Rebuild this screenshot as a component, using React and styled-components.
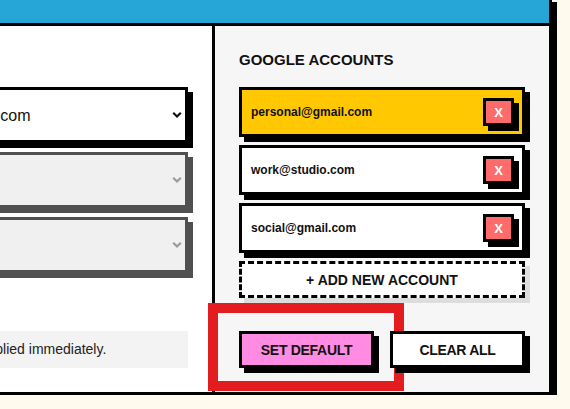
import React from 'react';
import styled, { createGlobalStyle } from 'styled-components';

/* ───────── global ───────── */

const GlobalStyle = createGlobalStyle`
  html, body {
    margin: 0;
    padding: 0;
  }

  body {
    background: #fffaee;
    font-family: "Liberation Sans", Arial, sans-serif;
    color: #111111;
    overflow: hidden;
  }

  * {
    box-sizing: border-box;
  }
`;

/* ───────── card shell ───────── */

const Card = styled.section`
  width: 716px;
  margin: -3px 0 0 -164px;
  border: 3px solid #000000;
  box-shadow: 5px 5px 0 #000000;
  background: #ffffff;
`;

const Header = styled.header`
  height: 26px;
  background: #25a6d6;
  border-bottom: 3px solid #000000;
`;

const Body = styled.div`
  display: grid;
  grid-template-columns: 1fr 337px;
`;

const Panel = styled.div`
  display: flex;
  flex-direction: column;
  padding: 24px;
  background: ${(p) => (p.$side ? '#f6f6f6' : '#ffffff')};
  border-left: ${(p) => (p.$side ? '3px solid #000000' : 'none')};
`;

const SectionTitle = styled.h2`
  margin: 0 0 17px 0;
  font-size: 15px;
  line-height: 20px;
  font-weight: 700;
  text-transform: uppercase;
  color: #111111;
`;

/* ───────── routing selects ───────── */

const SelectStack = styled.div`
  display: flex;
  flex-direction: column;
  gap: 9px;
  margin-top: 37px;
`;

const SelectWrap = styled.div`
  position: relative;
  box-shadow: 5px 5px 0 ${(p) => (p.disabled ? '#505050' : '#000000')};
  color: ${(p) => (p.disabled ? '#9a9a9a' : '#111111')};
`;

const Select = styled.select`
  display: block;
  width: 100%;
  height: 56px;
  appearance: none;
  margin: 0;
  padding: 0 34px 0 14px;
  border: 3px solid #000000;
  border-radius: 0;
  background: #ffffff;
  font-family: inherit;
  font-size: 16px;
  color: #111111;
  outline: none;
  opacity: 1;

  &:disabled {
    opacity: 1;
    border-color: #505050;
    background: #f0f0f0;
    color: #f0f0f0;
  }
`;

const Chevron = styled.svg`
  position: absolute;
  right: 6px;
  top: 50%;
  width: 10px;
  height: 7px;
  transform: translateY(-50%);
  pointer-events: none;
`;

const Note = styled.p`
  margin: auto 0 0 0;
  padding: 10px 14px;
  background: #f3f3f3;
  font-size: 14px;
  line-height: 17px;
  color: #222222;
`;

/* ───────── accounts ───────── */

const AccountList = styled.div`
  display: flex;
  flex-direction: column;
  gap: 8px;
`;

const AccountRow = styled.div`
  display: flex;
  align-items: center;
  justify-content: space-between;
  height: 50px;
  padding: 0 8px 0 9px;
  border: 3px solid #000000;
  background: ${(p) => (p.$active ? '#ffc800' : '#ffffff')};
  box-shadow: 5px 5px 0 #000000;
  font-size: 12px;
  font-weight: 700;
`;

const RemoveButton = styled.button`
  width: 31px;
  height: 28px;
  padding: 0;
  border: 3px solid #000000;
  background: #ff6b6b;
  box-shadow: 5px 5px 0 #000000;
  color: #ffffff;
  font-family: inherit;
  font-size: 13px;
  font-weight: 700;
  cursor: pointer;
`;

const AddButton = styled.button`
  height: 37px;
  padding: 0;
  border: 3px dashed #000000;
  background: #ffffff;
  box-shadow: 5px 5px 0 #dddddd;
  color: #111111;
  font-family: inherit;
  font-size: 14px;
  font-weight: 700;
  cursor: pointer;
`;

const Actions = styled.div`
  display: grid;
  grid-template-columns: 1fr 1fr;
  gap: 16px;
  margin-top: 33px;
`;

const ActionSlot = styled.div`
  position: relative;
`;

const ActionButton = styled.button`
  width: 100%;
  height: 37px;
  padding: 0;
  border: 3px solid #000000;
  background: ${(p) => p.$bg || '#ffffff'};
  box-shadow: 5px 5px 0 #000000;
  color: #111111;
  font-family: inherit;
  font-size: 14px;
  font-weight: 700;
  letter-spacing: -0.3px;
  cursor: pointer;
`;

/* red callout ring drawn over the focused action */
const Callout = styled.span`
  position: absolute;
  top: -28px;
  left: -31px;
  right: -30px;
  bottom: -23px;
  border: 10px solid #e31c1f;
  pointer-events: none;
`;

/* ───────── component ───────── */

const accounts = [
  { email: 'personal@gmail.com', active: true },
  { email: 'work@studio.com' },
  { email: 'social@gmail.com' },
];

const RoutingSelect = ({ value, disabled }) => (
  <SelectWrap disabled={disabled}>
    <Select disabled={disabled} defaultValue={value}>
      <option value={value}>{value}</option>
    </Select>
    <Chevron viewBox="0 0 10 7" aria-hidden="true">
      <polyline
        points="1.2,1.2 5,5 8.8,1.2"
        fill="none"
        stroke="currentColor"
        strokeWidth="2.2"
      />
    </Chevron>
  </SelectWrap>
);

const App = () => {
  return (
    <>
      <GlobalStyle />
      <Card>
        <Header />
        <Body>
          <Panel>
            <SelectStack>
              <RoutingSelect value="personal@gmail.com" />
              <RoutingSelect value="" disabled />
              <RoutingSelect value="" disabled />
            </SelectStack>
            <Note>Changes will be applied immediately.</Note>
          </Panel>

          <Panel $side>
            <SectionTitle>Google Accounts</SectionTitle>
            <AccountList>
              {accounts.map((a) => (
                <AccountRow key={a.email} $active={a.active}>
                  <span>{a.email}</span>
                  <RemoveButton aria-label={`Remove ${a.email}`}>X</RemoveButton>
                </AccountRow>
              ))}
              <AddButton>+ ADD NEW ACCOUNT</AddButton>
            </AccountList>

            <Actions>
              <ActionSlot>
                <ActionButton $bg="#ff8be2">SET DEFAULT</ActionButton>
                <Callout />
              </ActionSlot>
              <ActionSlot>
                <ActionButton>CLEAR ALL</ActionButton>
              </ActionSlot>
            </Actions>
          </Panel>
        </Body>
      </Card>
    </>
  );
};

export default App;
